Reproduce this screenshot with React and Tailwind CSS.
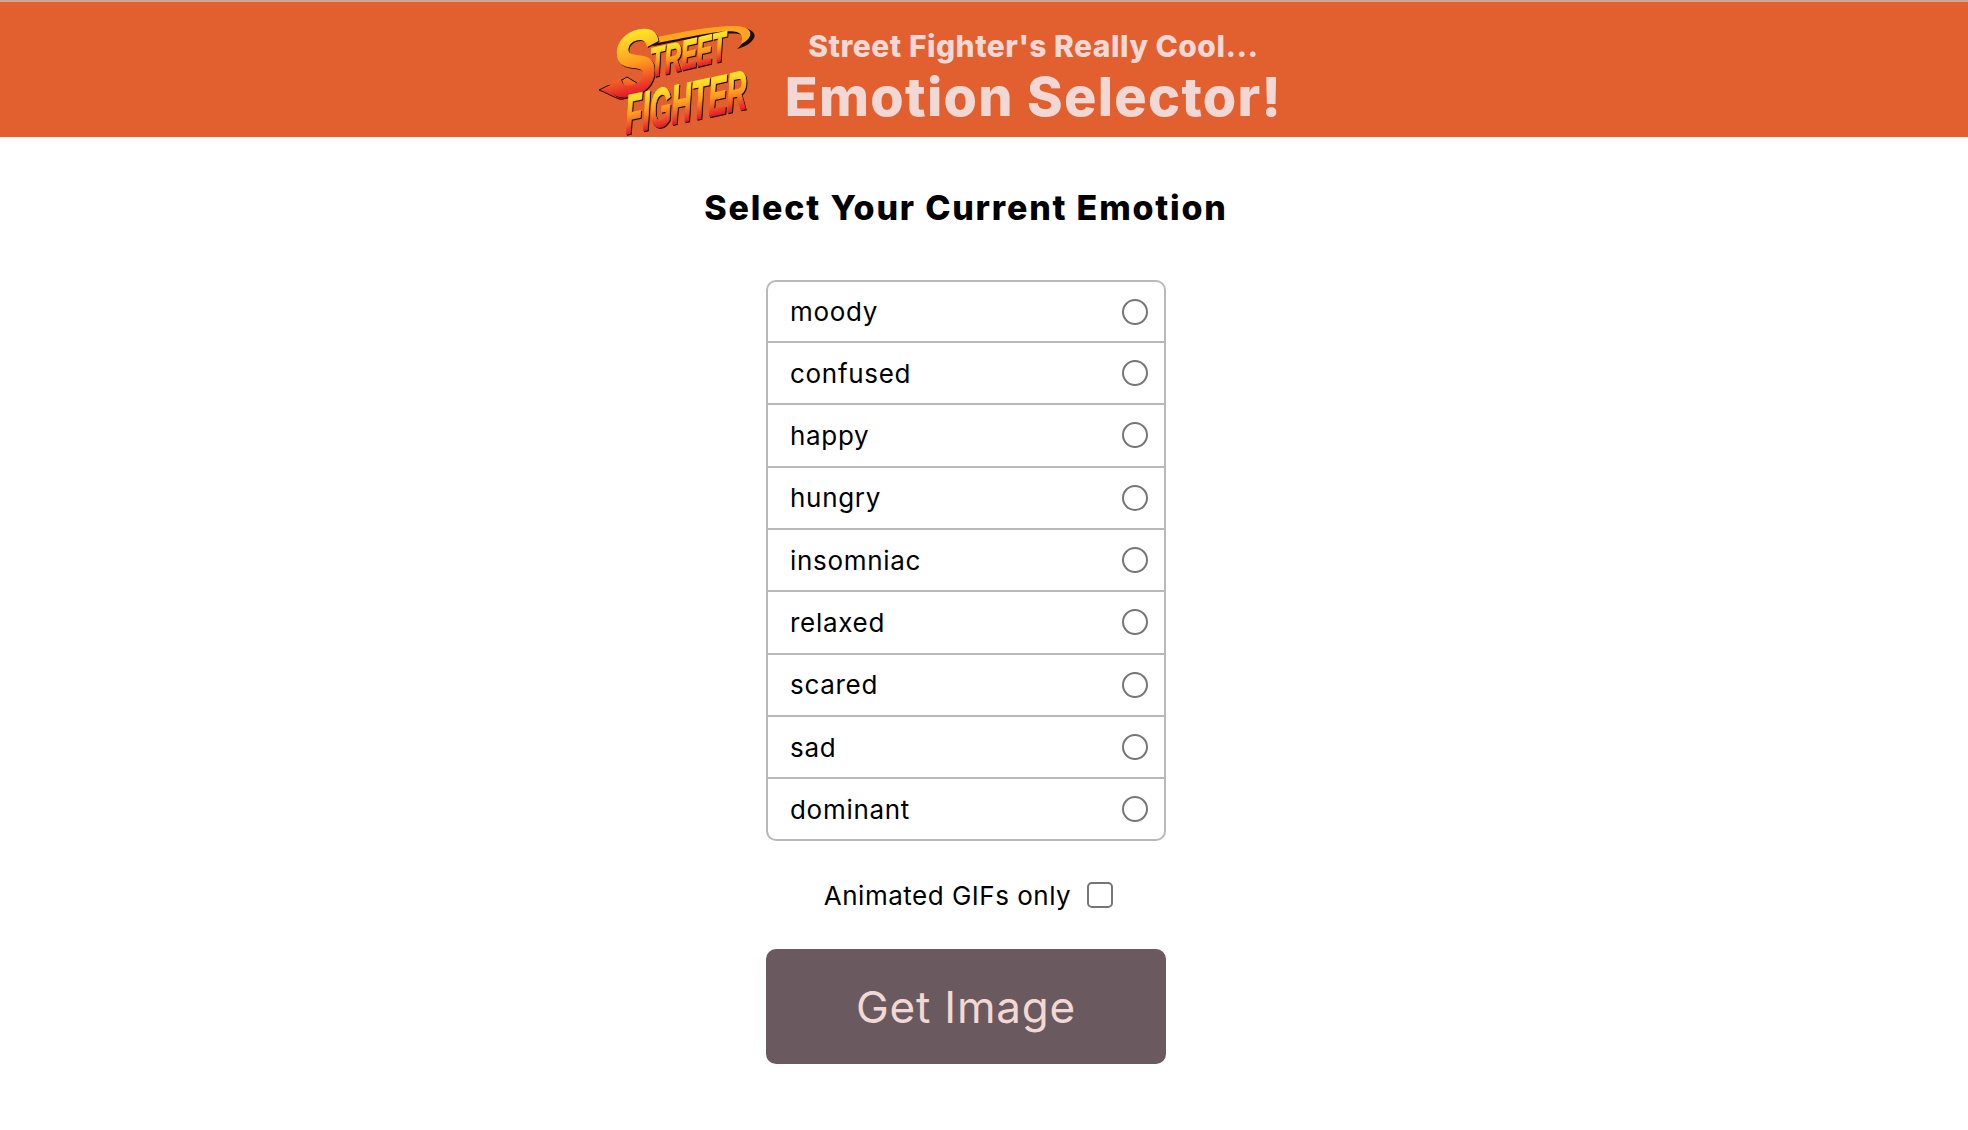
import React from "react";

const emotions = ["moody", "confused", "happy", "hungry", "insomniac", "relaxed", "scared", "sad", "dominant"];

const Logo = () => (
  <svg width="160" height="110" viewBox="0 0 160 110" className="shrink-0">
    <defs>
      <linearGradient id="fire" x1="0" y1="0" x2="0" y2="1">
        <stop offset="0.15" stopColor="#fff02a" />
        <stop offset="0.5" stopColor="#ff9a1f" />
        <stop offset="0.82" stopColor="#e3172b" />
      </linearGradient>
      <linearGradient id="tail" x1="0" y1="0" x2="0" y2="1">
        <stop offset="0" stopColor="#f9821f" />
        <stop offset="1" stopColor="#e3172b" />
      </linearGradient>
    </defs>
    {/* swoosh over the T's and the tail of the S */}
    <path d="M52 14 C82 8 114 1 140 1 C154 1 162 6 159 12 C156 18 149 21 142 23 C148 18 151 13 147 9 C136 4 100 12 58 20 Z" fill="#1a0d08" />
    <path d="M52 13 C82 7 114 0 139 0 C151 0 157 4 155 10 C153 14 150 16 146 18 C148 13 148 8 142 6 C130 3 100 10 57 18 Z" fill="#ffa51f" />
    <path d="M4 64 C14 58 24 57 32 51 L42 57 C40 67 32 75 24 73 C18 71 12 67 4 64 Z" fill="url(#tail)" stroke="#1a0d08" strokeWidth="1" />
    <g
      className="[filter:drop-shadow(1px_1px_0_#1a0d08)]"
      fontFamily="'Liberation Sans', sans-serif"
      fontWeight="700"
      fontStyle="italic"
      fill="url(#fire)"
      stroke="url(#fire)"
      strokeWidth="1.4"
    >
      <text transform="translate(14 74) rotate(-13) skewX(-14)" fontSize="88" textLength="50" lengthAdjust="spacingAndGlyphs">S</text>
      <text transform="translate(56 51) rotate(-13) skewX(-10)" fontSize="40" textLength="78" lengthAdjust="spacingAndGlyphs">TREET</text>
      <text transform="translate(31 108) rotate(-12) skewX(-10)" fontSize="54" textLength="124" lengthAdjust="spacingAndGlyphs">FIGHTER</text>
    </g>
  </svg>
);

const App = () => {
  return (
    <div className="min-h-[1130px] bg-white font-['Inter',sans-serif] text-black">
      <header className="h-[137px] bg-[#e2602f] border-t-2 border-[#cfa595] flex items-center justify-center pr-[91px] overflow-hidden">
        <div className="mt-[23px]">
          <Logo />
        </div>
        <div className="ml-[30px] mt-[16px] flex flex-col items-center text-[#f2d8d5] font-extrabold">
          <span className="text-[30px] leading-[38px] tracking-[0.5px]">Street Fighter's Really Cool...</span>
          <span className="text-[54px] leading-[64px] tracking-[1.3px]">Emotion Selector!</span>
        </div>
      </header>
      <main className="flex flex-col items-center pr-[36px] pt-[50px]">
        <h1 className="font-extrabold text-[34px] leading-[42px] tracking-[1.8px]">
          Select Your Current Emotion
        </h1>
        <div className="mt-[51px] w-[400px] h-[561px] border-2 border-[#b9b9b9] rounded-[10px] grid grid-rows-[61px_repeat(7,62.33px)_1fr] divide-y-2 divide-[#b9b9b9]">
          {emotions.map((emotion) => (
            <label key={emotion} className="flex items-center justify-between pl-[22px] pr-[16px]">
              <span className="text-[26px] tracking-[0.7px]">{emotion}</span>
              <input type="radio" name="emotion" className="appearance-none m-0 w-[26px] h-[26px] rounded-full border-2 border-[#767676] bg-white" />
            </label>
          ))}
        </div>
        <label className="mt-[41px] pl-[5px] flex items-center h-[26px]">
          <span className="text-[26px] tracking-[0.5px]">Animated GIFs only</span>
          <input type="checkbox" className="appearance-none m-0 ml-[16px] w-[26px] h-[26px] rounded-[5px] border-2 border-[#767676] bg-white" />
        </label>
        <button className="mt-[41px] w-[400px] h-[115px] bg-[#6a5a60] rounded-[10px] text-[#f2d8d5] text-[44px] tracking-[0.8px]">
          Get Image
        </button>
      </main>
    </div>
  );
};

export default App;
